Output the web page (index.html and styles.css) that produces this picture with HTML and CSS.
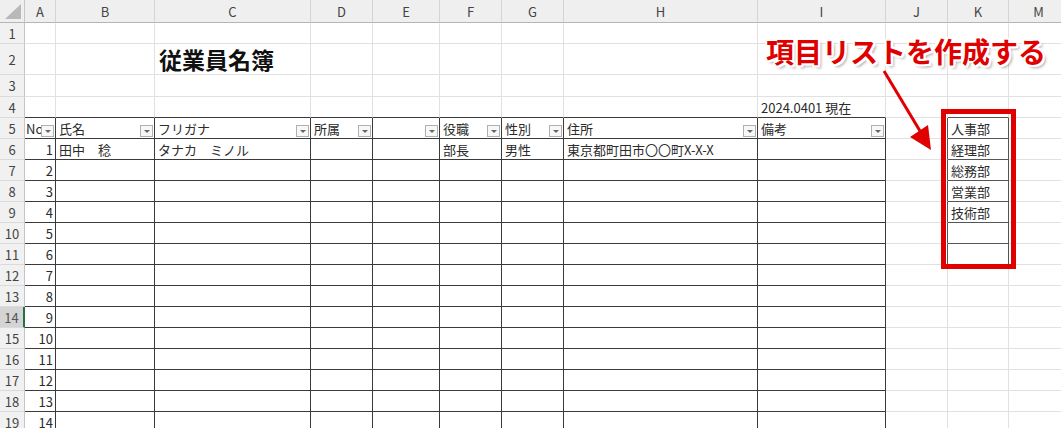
FILE: index.html
```html
<!DOCTYPE html>
<html lang="ja">
<head>
<meta charset="utf-8">
<title>従業員名簿</title>
<link rel="stylesheet" href="styles.css">
</head>
<body>
<div class="wrap">
  <div class="sheet">
    <div class="ch corner"><span class="tri"></span></div><div class="ch">A</div><div class="ch">B</div><div class="ch">C</div><div class="ch">D</div><div class="ch">E</div><div class="ch">F</div><div class="ch">G</div><div class="ch">H</div><div class="ch">I</div><div class="ch">J</div><div class="ch">K</div><div class="ch">M</div>

    <div class="rh">1</div><div class="c"></div><div class="c"></div><div class="c"></div><div class="c"></div><div class="c"></div><div class="c"></div><div class="c"></div><div class="c"></div><div class="c"></div><div class="c"></div><div class="c"></div><div class="c"></div>

    <div class="rh">2</div><div class="c"></div><div class="c"></div><div class="c title">従業員名簿</div><div class="c"></div><div class="c"></div><div class="c"></div><div class="c"></div><div class="c"></div><div class="c"></div><div class="c"></div><div class="c"></div><div class="c"></div>

    <div class="rh">3</div><div class="c"></div><div class="c"></div><div class="c"></div><div class="c"></div><div class="c"></div><div class="c"></div><div class="c"></div><div class="c"></div><div class="c"></div><div class="c"></div><div class="c"></div><div class="c"></div>

    <div class="rh">4</div><div class="c tt"></div><div class="c tt"></div><div class="c tt"></div><div class="c tt"></div><div class="c tt"></div><div class="c tt"></div><div class="c tt"></div><div class="c tt"></div><div class="c tt">2024.0401 現在</div><div class="c"></div><div class="c kt"></div><div class="c"></div>

    <div class="rh">5</div><div class="c t h hn"><span class="lbl">No</span><span class="fb"></span></div><div class="c t h"><span class="lbl">氏名</span><span class="fb"></span></div><div class="c t h"><span class="lbl">フリガナ</span><span class="fb"></span></div><div class="c t h"><span class="lbl">所属</span><span class="fb"></span></div><div class="c t h"><span class="lbl"></span><span class="fb"></span></div><div class="c t h"><span class="lbl">役職</span><span class="fb"></span></div><div class="c t h"><span class="lbl">性別</span><span class="fb"></span></div><div class="c t h"><span class="lbl">住所</span><span class="fb"></span></div><div class="c t h"><span class="lbl">備考</span><span class="fb"></span></div><div class="c kj"></div><div class="c k">人事部</div><div class="c"></div>

    <div class="rh">6</div><div class="c t n">1</div><div class="c t">田中　稔</div><div class="c t">タナカ　ミノル</div><div class="c t"></div><div class="c t"></div><div class="c t">部長</div><div class="c t">男性</div><div class="c t">東京都町田市〇〇町X-X-X</div><div class="c t"></div><div class="c kj"></div><div class="c k">経理部</div><div class="c"></div>

    <div class="rh">7</div><div class="c t n">2</div><div class="c t"></div><div class="c t"></div><div class="c t"></div><div class="c t"></div><div class="c t"></div><div class="c t"></div><div class="c t"></div><div class="c t"></div><div class="c kj"></div><div class="c k">総務部</div><div class="c"></div>

    <div class="rh">8</div><div class="c t n">3</div><div class="c t"></div><div class="c t"></div><div class="c t"></div><div class="c t"></div><div class="c t"></div><div class="c t"></div><div class="c t"></div><div class="c t"></div><div class="c kj"></div><div class="c k">営業部</div><div class="c"></div>

    <div class="rh">9</div><div class="c t n">4</div><div class="c t"></div><div class="c t"></div><div class="c t"></div><div class="c t"></div><div class="c t"></div><div class="c t"></div><div class="c t"></div><div class="c t"></div><div class="c kj"></div><div class="c k">技術部</div><div class="c"></div>

    <div class="rh">10</div><div class="c t n">5</div><div class="c t"></div><div class="c t"></div><div class="c t"></div><div class="c t"></div><div class="c t"></div><div class="c t"></div><div class="c t"></div><div class="c t"></div><div class="c kj"></div><div class="c k"></div><div class="c"></div>

    <div class="rh">11</div><div class="c t n">6</div><div class="c t"></div><div class="c t"></div><div class="c t"></div><div class="c t"></div><div class="c t"></div><div class="c t"></div><div class="c t"></div><div class="c t"></div><div class="c kj"></div><div class="c k"></div><div class="c"></div>

    <div class="rh">12</div><div class="c t n">7</div><div class="c t"></div><div class="c t"></div><div class="c t"></div><div class="c t"></div><div class="c t"></div><div class="c t"></div><div class="c t"></div><div class="c t"></div><div class="c"></div><div class="c"></div><div class="c"></div>

    <div class="rh">13</div><div class="c t n">8</div><div class="c t"></div><div class="c t"></div><div class="c t"></div><div class="c t"></div><div class="c t"></div><div class="c t"></div><div class="c t"></div><div class="c t"></div><div class="c"></div><div class="c"></div><div class="c"></div>

    <div class="rh sel">14</div><div class="c t n">9</div><div class="c t"></div><div class="c t"></div><div class="c t"></div><div class="c t"></div><div class="c t"></div><div class="c t"></div><div class="c t"></div><div class="c t"></div><div class="c"></div><div class="c"></div><div class="c"></div>

    <div class="rh">15</div><div class="c t n">10</div><div class="c t"></div><div class="c t"></div><div class="c t"></div><div class="c t"></div><div class="c t"></div><div class="c t"></div><div class="c t"></div><div class="c t"></div><div class="c"></div><div class="c"></div><div class="c"></div>

    <div class="rh">16</div><div class="c t n">11</div><div class="c t"></div><div class="c t"></div><div class="c t"></div><div class="c t"></div><div class="c t"></div><div class="c t"></div><div class="c t"></div><div class="c t"></div><div class="c"></div><div class="c"></div><div class="c"></div>

    <div class="rh">17</div><div class="c t n">12</div><div class="c t"></div><div class="c t"></div><div class="c t"></div><div class="c t"></div><div class="c t"></div><div class="c t"></div><div class="c t"></div><div class="c t"></div><div class="c"></div><div class="c"></div><div class="c"></div>

    <div class="rh">18</div><div class="c t n">13</div><div class="c t"></div><div class="c t"></div><div class="c t"></div><div class="c t"></div><div class="c t"></div><div class="c t"></div><div class="c t"></div><div class="c t"></div><div class="c"></div><div class="c"></div><div class="c"></div>

    <div class="rh">19</div><div class="c t n">14</div><div class="c t"></div><div class="c t"></div><div class="c t"></div><div class="c t"></div><div class="c t"></div><div class="c t"></div><div class="c t"></div><div class="c t"></div><div class="c"></div><div class="c"></div><div class="c"></div>
  </div>

  <div class="note">項目リストを作成する</div>
  <svg class="arrow" width="1061" height="428" viewBox="0 0 1061 428">
    <line x1="884" y1="71" x2="920" y2="131" stroke="#e00000" stroke-width="3"/>
    <polygon points="931,150 910,137 928,125" fill="#e00000"/>
  </svg>
  <div class="redbox"></div>
</div>
</body>
</html>
```

FILE: styles.css
```css
html, body {
  margin: 0;
  padding: 0;
  background: #ffffff;
  overflow: hidden;
}

.wrap {
  position: relative;
  width: 1061px;
  height: 428px;
  overflow: hidden;
  font-family: "Noto Sans CJK JP", "Noto Sans", sans-serif;
  color: #2b2b2b;
}

.sheet {
  display: grid;
  grid-template-columns: 25px 31px 99px 156px 62px 67px 62px 62px 194px 128px 62px 61px 60px;
  grid-template-rows: 23px 21px 31px 22px 21px repeat(15, 21px);
}

.ch {
  box-sizing: border-box;
  background: #efefef;
  border-right: 1px solid #d4d4d4;
  border-bottom: 1px solid #b5b5b5;
  display: flex;
  align-items: center;
  justify-content: center;
  font-size: 13px;
  color: #444;
}

.corner {
  position: relative;
  border-right-color: #c6c6c6;
}

.tri {
  position: absolute;
  right: 3px;
  bottom: 3px;
  width: 0;
  height: 0;
  border-left: 16px solid transparent;
  border-bottom: 15px solid #b8b8b8;
}

.rh {
  box-sizing: border-box;
  background: #f1f1f1;
  border-right: 1px solid #c6c6c6;
  border-bottom: 1px solid #dadada;
  display: flex;
  align-items: center;
  justify-content: center;
  font-size: 13px;
  color: #444;
}

.rh.sel {
  background: #d4d4d4;
  border-right: 2px solid #217346;
  color: #555;
}

.c {
  box-sizing: border-box;
  border-right: 1px solid #e1e1e1;
  border-bottom: 1px solid #e1e1e1;
  display: flex;
  align-items: center;
  padding: 0 3px;
  font-size: 13px;
  white-space: nowrap;
  overflow: visible;
  min-width: 0;
}

.c.t {
  border-right-color: #3a3a3a;
  border-bottom-color: #3a3a3a;
}

.c.tt {
  border-bottom-color: #3a3a3a;
}

.c.kt {
  border-bottom-color: #555;
}

.c.kj {
  border-right-color: #555;
}

.c.k {
  border-right-color: #555;
  border-bottom-color: #555;
}

.c.n {
  justify-content: flex-end;
  padding-right: 2px;
}

.c.h {
  padding: 0 1px 0 3px;
  overflow: hidden;
}

.c.hn {
  padding-left: 1px;
}

.lbl {
  flex: 1;
  min-width: 0;
  overflow: hidden;
}

.fb {
  flex: none;
  position: relative;
  box-sizing: border-box;
  width: 13px;
  height: 12px;
  align-self: flex-end;
  margin-bottom: 1px;
  border: 1px solid #b0b0b0;
  background: #f7f7f7;
}

.fb::after {
  content: "";
  position: absolute;
  left: 3px;
  top: 4px;
  border-left: 3px solid transparent;
  border-right: 3px solid transparent;
  border-top: 3px solid #666;
}

.c.title {
  align-items: flex-end;
  padding: 0 0 3px 4px;
  font-size: 23px;
  line-height: 24px;
  font-weight: 700;
  color: #111;
}

.note {
  position: absolute;
  left: 766px;
  top: 31px;
  font-size: 28px;
  line-height: 40px;
  font-weight: 700;
  color: #e00000;
  white-space: nowrap;
  text-shadow:
    1px 0 0 #fff, -1px 0 0 #fff, 0 1px 0 #fff, 0 -1px 0 #fff,
    2px 0 0 #fff, -2px 0 0 #fff, 0 2px 0 #fff, 0 -2px 0 #fff,
    2px 2px 0 #fff, -2px -2px 0 #fff, 2px -2px 0 #fff, -2px 2px 0 #fff,
    3px 3px 3px rgba(0, 0, 0, 0.35);
}

.arrow {
  position: absolute;
  left: 0;
  top: 0;
  pointer-events: none;
}

.redbox {
  position: absolute;
  left: 941px;
  top: 109px;
  width: 75px;
  height: 160px;
  box-sizing: border-box;
  border: 5px solid #e00000;
}
```
